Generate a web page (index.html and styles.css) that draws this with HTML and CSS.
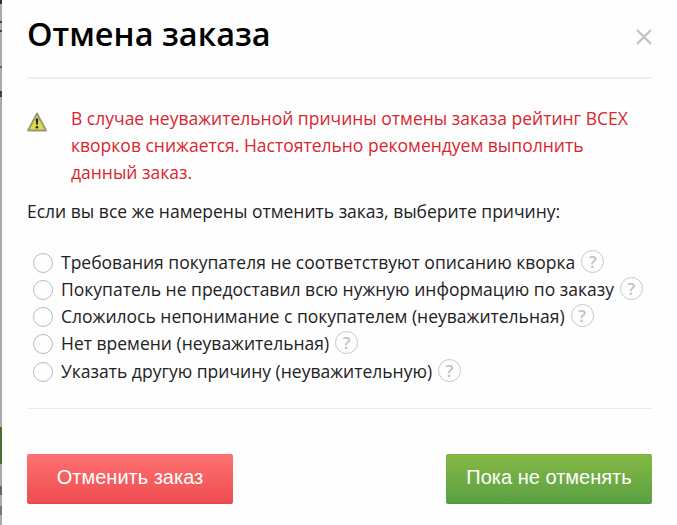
FILE: index.html
```html
<!DOCTYPE html>
<html lang="ru">
<head>
<meta charset="utf-8">
<title>Отмена заказа</title>
<link rel="stylesheet" href="styles.css">
</head>
<body>
<div class="backdrop"></div>
<main class="modal">
  <header class="modal-header">
    <h1 class="title">Отмена заказа</h1>
    <button class="close" aria-label="Закрыть"><svg width="18" height="18" viewBox="0 0 18 18"><path d="M2 2L16 16M16 2L2 16" stroke="#c4c4c4" stroke-width="2.4"/></svg></button>
  </header>
  <section class="warning">
    <svg class="warning-icon" width="22" height="20" viewBox="0 0 22 20"><path d="M11 1.5L20 18.5H2Z" fill="#dfdb45" stroke="#96967e" stroke-width="1.8" stroke-linejoin="round"/><path d="M9.7 6.5h2.6l-.5 6.3h-1.6z" fill="#25250f"/><circle cx="11" cy="15.3" r="1.3" fill="#25250f"/></svg>
    <p class="warning-text">В случае неуважительной причины отмены заказа рейтинг ВСЕХ<br>кворков снижается. Настоятельно рекомендуем выполнить<br>данный заказ.</p>
  </section>
  <p class="prompt">Если вы все же намерены отменить заказ, выберите причину:</p>
  <ul class="reasons">
    <li class="reason"><span class="radio"></span><span class="label">Требования покупателя не соответствуют описанию кворка</span><span class="help">?</span></li>
    <li class="reason"><span class="radio"></span><span class="label">Покупатель не предоставил всю нужную информацию по заказу</span><span class="help">?</span></li>
    <li class="reason"><span class="radio"></span><span class="label">Сложилось непонимание с покупателем (неуважительная)</span><span class="help">?</span></li>
    <li class="reason"><span class="radio"></span><span class="label">Нет времени (неуважительная)</span><span class="help">?</span></li>
    <li class="reason"><span class="radio"></span><span class="label">Указать другую причину (неуважительную)</span><span class="help">?</span></li>
  </ul>
  <footer class="actions">
    <button class="button button-cancel">Отменить заказ</button>
    <button class="button button-keep">Пока не отменять</button>
  </footer>
</main>
</body>
</html>
```
FILE: styles.css
```css
* { box-sizing: border-box; }
body {
  margin: 0;
  height: 525px;
  display: flex;
  overflow: hidden;
  background: #fefefe;
  font-family: "Open Sans", sans-serif;
  font-size: 17.5px;
  color: #222;
}
.backdrop {
  width: 2px;
  background: linear-gradient(#333 0 4px, #aaa 4px 21px, #444 21px 23px, #aaa 23px 30px, #444 30px 32px, #aaa 32px 66px, #567 66px 68px, #aaa 68px 91px, #444 91px 97px, #aaa 97px 427px, #47702f 427px 464px, #aaa 464px 486px, #666 486px 495px, #aaa 495px 506px, #777 506px 515px, #aaa 515px);
}
.modal { width: 675px; padding: 0 25px; }
.modal-header {
  height: 79px;
  display: flex;
  justify-content: space-between;
  border-bottom: 2px solid #f0f0f0;
}
.title {
  margin: 12px 0 0;
  font-size: 32.5px;
  line-height: 44px;
  font-weight: 600;
  color: #000;
  white-space: nowrap;
}
.close {
  margin: 28px -1px 0 0;
  padding: 0;
  width: 18px;
  height: 18px;
  border: 0;
  background: none;
}
.close svg { display: block; }
.warning { display: flex; padding-top: 26px; }
.warning-icon { flex: none; margin: 7px 23px 0 -1px; }
.warning-text {
  margin: 0;
  line-height: 27px;
  color: #d8272f;
  white-space: nowrap;
}
.prompt { margin: 12px 0 0; line-height: 27px; white-space: nowrap; }
.reasons { margin: 23px 0 0; padding: 0 0 0 6px; list-style: none; }
.reason { height: 27px; display: flex; align-items: center; white-space: nowrap; }
.reason:last-child { margin-top: 1px; }
.radio {
  flex: none;
  width: 20px;
  height: 20px;
  margin: 2px 8px 0 0;
  border: 1.5px solid #b9b9b9;
  border-radius: 50%;
}
.help {
  flex: none;
  width: 23px;
  height: 23px;
  margin: -1px 0 0 6px;
  border: 1px solid #c8c8c8;
  border-radius: 50%;
  text-align: center;
  font-size: 17px;
  line-height: 21px;
  font-weight: 600;
  color: #c2c2c2;
}
.actions {
  margin-top: 24px;
  padding-top: 45px;
  border-top: 1px solid #ececec;
  display: flex;
  justify-content: space-between;
}
.button {
  width: 206px;
  height: 50px;
  padding: 0 0 4px;
  border: 0;
  border-radius: 3px;
  font: 20px "Liberation Sans", sans-serif;
  color: #fff;
}
.button-cancel { background: linear-gradient(#ff7272, #ed4b4e); box-shadow: inset 0 -1px #d94b50, inset 0 1px #f56b70; }
.button-keep { background: linear-gradient(#86b945, #58a043); box-shadow: inset 0 -1px #579246, inset 0 1px #7dad45; }
```
